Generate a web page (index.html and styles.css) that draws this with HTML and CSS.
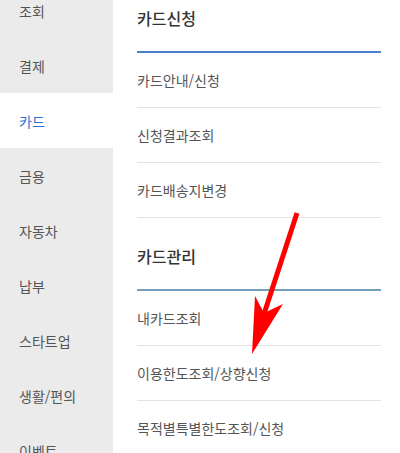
FILE: index.html
```html
<!DOCTYPE html>
<html lang="ko">

<head>
    <meta charset="UTF-8">
    <meta name="viewport" content="width=device-width, initial-scale=1.0">
    <title>전체메뉴</title>
    <link rel="stylesheet" href="styles.css">
</head>

<body>
    <div class="page">
        <nav class="side-menu">
            <div class="side-item">조회</div>
            <div class="side-item">결제</div>
            <div class="side-item active">카드</div>
            <div class="side-item">금용</div>
            <div class="side-item">자동차</div>
            <div class="side-item">납부</div>
            <div class="side-item">스타트업</div>
            <div class="side-item">생활/편의</div>
            <div class="side-item">이벤트</div>
        </nav>

        <main class="sub-menu">
            <section class="menu-group">
                <h2 class="group-title">카드신청</h2>
                <a class="menu-link">카드안내/신청</a>
                <a class="menu-link">신청결과조회</a>
                <a class="menu-link">카드배송지변경</a>
            </section>

            <section class="menu-group">
                <h2 class="group-title muted">카드관리</h2>
                <a class="menu-link">내카드조회</a>
                <a class="menu-link">이용한도조회/상향신청</a>
                <a class="menu-link">목적별특별한도조회/신청</a>
            </section>
        </main>
    </div>

    <!-- 표시용 화살표 -->
    <svg class="pointer" width="400" height="453" viewBox="0 0 400 453">
        <line x1="297" y1="213" x2="264" y2="314" stroke="#ff0000" stroke-width="5" />
        <polygon points="252,354 255,296 264,313 283,304" fill="#ff0000" />
    </svg>
</body>

</html>
```

FILE: styles.css
```css
* {
    margin: 0;
    padding: 0;
    box-sizing: border-box;
}

body {
    font-family: "Noto Sans CJK KR", "Noto Sans", sans-serif;
    background: #ffffff;
    color: #555555;
    width: 400px;
    height: 453px;
    overflow: hidden;
    position: relative;
}

.page {
    display: flex;
    margin-top: -20px;
}

.side-menu {
    width: 113px;
    flex-shrink: 0;
    background: #ebebeb;
    padding-top: 3px;
    min-height: 500px;
}

.side-item {
    height: 55px;
    display: flex;
    align-items: center;
    padding-left: 19px;
    font-size: 14px;
    color: #555555;
}

.side-item.active {
    background: #ffffff;
    color: #2f6fd4;
}

.sub-menu {
    flex: 1;
    padding: 0 19px 0 24px;
}

.menu-group {
    display: flex;
    flex-direction: column;
}

.group-title {
    height: 73px;
    display: flex;
    align-items: center;
    padding-top: 4px;
    font-size: 16px;
    font-weight: 500;
    color: #333333;
    border-bottom: 2px solid #4a7fd0;
}

.group-title.muted {
    border-bottom-color: #739fbb;
}

.menu-link {
    height: 55px;
    display: flex;
    align-items: center;
    font-size: 14px;
    color: #555555;
    border-bottom: 1px solid #e3e3e3;
}

.pointer {
    position: absolute;
    top: 0;
    left: 0;
    pointer-events: none;
}
```
